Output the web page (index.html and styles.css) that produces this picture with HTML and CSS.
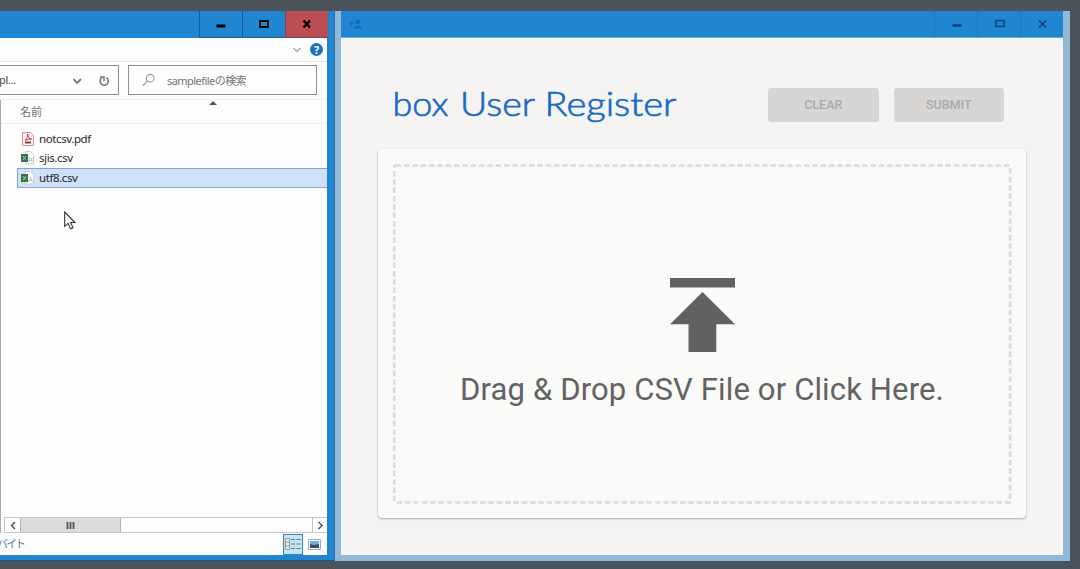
FILE: index.html
```html
<!DOCTYPE html>
<html lang="ja">
<head>
<meta charset="utf-8">
<title>box User Register</title>
<link rel="stylesheet" href="styles.css">
</head>
<body>
<div class="desktop">
  <section class="explorer">
    <header class="explorer-title">
      <button class="win-btn"><svg width="42" height="27"><path d="M16.500 15h9" stroke="#000" stroke-width="3"/></svg></button>
      <button class="win-btn"><svg width="42" height="27"><rect x="17" y="10" width="8" height="6" fill="none" stroke="#000" stroke-width="2"/></svg></button>
      <button class="win-btn close"><svg width="42" height="27"><path d="M17.500 9.500l6.500 7M24 9.500l-6.500 7" stroke="#000" stroke-width="2.200"/></svg></button>
    </header>
    <div class="explorer-body">
      <div class="ribbon">
        <svg width="10" height="8"><path d="M1.500 2l3.500 3.500L8.500 2" fill="none" stroke="#aaa" stroke-width="1.300"/></svg>
        <span class="help">?</span>
      </div>
      <div class="address-row">
        <div class="address">
          <span class="path">pl...</span>
          <svg class="address-icons" width="46" height="26">
            <path d="M1.500 12.200l3.700 3.700L8.900 12.200" fill="none" stroke="#707070" stroke-width="1.800"/>
            <path d="M34.500 10.700a4.100 4.100 0 1 1-5 .3M28 10h4v4" fill="none" stroke="#707070" stroke-width="1.500"/>
          </svg>
        </div>
        <div class="search">
          <svg width="14" height="14"><circle cx="8.200" cy="5.200" r="3.800" fill="none" stroke="#999" stroke-width="1.100"/><path d="M5.400 8L1 12.500" stroke="#999" stroke-width="1.200"/></svg>
          <span>samplefileの検索</span>
        </div>
      </div>
      <div class="file-pane">
        <div class="column-head"><span>名前</span><svg class="sort" width="8" height="4"><path d="M0 4l4-4 4 4z" fill="#555"/></svg></div>
        <ul class="files">
          <li><svg width="14" height="14"><path d="M1.500.5h8l3 3v10h-11z" fill="#fff4f4" stroke="#d98c92"/><path d="M4 8c3-2 3-5 2.500-6 0 3 2 5 4 5-2 0-4 0-6.500 1.500" fill="none" stroke="#d2303c"/><path d="M4 10.500h6" stroke="#7a4548" stroke-width="2"/></svg><span>notcsv.pdf</span></li>
          <li><svg width="14" height="14"><path d="M4.500.5h5l3 3v9.500h-8z" fill="#fff" stroke="#c9cdca"/><path d="M7.500 11l2-5 2 5M8 9.500h3" fill="none" stroke="#bac9bd"/><path d="M0 3h7v8H0z" fill="#3b704d"/><path d="M2 5l3 4M5 5L2 9" stroke="#a3c0aa"/></svg><span>sjis.csv</span></li>
          <li class="selected"><svg width="14" height="14"><path d="M4.500.5h5l3 3v9.500h-8z" fill="#fff" stroke="#c9cdca"/><path d="M7.500 11l2-5 2 5M8 9.500h3" fill="none" stroke="#bac9bd"/><path d="M0 3h7v8H0z" fill="#3b704d"/><path d="M2 5l3 4M5 5L2 9" stroke="#a3c0aa"/></svg><span>utf8.csv</span></li>
        </ul>
        <div class="scrollbar">
          <span class="scroll-btn"><svg width="8" height="9"><path d="M6 1L2.500 4.500 6 8" fill="none" stroke="#555" stroke-width="1.500"/></svg></span>
          <span class="thumb"><svg width="9" height="7"><path d="M1.500 0v7M4.500 0v7M7.500 0v7" stroke="#555" stroke-width="1.800"/></svg></span>
          <span class="scroll-btn right"><svg width="8" height="9"><path d="M2.500 1L6 4.500 2.500 8" fill="none" stroke="#555" stroke-width="1.500"/></svg></span>
        </div>
      </div>
      <footer class="status">
        <span class="bytes">バイト</span>
        <span class="view active"><svg width="16" height="14"><path d="M.5 1.500h4v11h-4zM.5 5h4M.5 9h4" fill="#eee" stroke="#999"/><path d="M6 2.500h10M6 7h10M6 11.500h10" stroke="#4c819f" stroke-width="1.200" stroke-dasharray="4 1.500"/></svg></span>
        <span class="view"><svg width="13" height="11"><path d="M.5.500h12v10H.5z" fill="#fff" stroke="#aaa"/><path d="M2 2h9v7H2z" fill="#6eb0df"/><path d="M2 5l4 1 5-1v4H2z" fill="#34546b"/></svg></span>
      </footer>
    </div>
    <svg class="cursor" width="12" height="19" viewBox="0 0 12 19"><path d="M.7 1v14.300l3.400-3 2.400 5.400 2.500-1.100-2.400-5.100h4.300z" fill="#fff" stroke="#333" stroke-width="1.100"/></svg>
  </section>

  <section class="app">
    <header class="app-title">
      <svg class="user-icon" width="15" height="13"><path d="M0 5.500h5M2.500 3v5" stroke="#1768c5" stroke-width="1.200"/><circle cx="8.700" cy="4" r="2.400" fill="#1768c5"/><path d="M4 10.500c0-4 9.500-4 9.500 0z" fill="#1768c5"/></svg>
      <span class="app-btn"><svg width="42" height="26"><path d="M17.500 14.500h9" stroke="#0b3f78" stroke-width="2.500"/></svg></span>
      <span class="app-btn"><svg width="42" height="26"><rect x="18" y="9.500" width="8" height="6" fill="none" stroke="#0b3f78" stroke-width="1.400"/></svg></span>
      <span class="app-btn"><svg width="42" height="26"><path d="M18 9.500l7 7M25 9.500l-7 7" stroke="#0b3f78" stroke-width="1.600"/></svg></span>
    </header>
    <main class="app-body">
      <div class="toolbar">
        <svg class="brand" width="290" height="44" role="heading">
          <text y="31.500"><tspan x="-.5" textLength="56" lengthAdjust="spacingAndGlyphs">box</tspan><tspan x="67" textLength="75" lengthAdjust="spacingAndGlyphs">User</tspan><tspan x="151.500" textLength="132" lengthAdjust="spacingAndGlyphs">Register</tspan></text>
        </svg>
        <div class="actions"><button class="action">CLEAR</button><button class="action">SUBMIT</button></div>
      </div>
      <div class="card">
        <div class="dropzone">
          <svg class="upload" width="65" height="75"><path d="M0 0h65v9.500H0zM32.500 14L65 46.300H46.300V74H18.500V46.300H0z" fill="#616161"/></svg>
          <p class="prompt">Drag &amp; Drop CSV File or Click Here.</p>
          <svg class="dashes" width="619" height="340"><rect x="1.200" y="1.500" width="616" height="337" rx="1.500" fill="none" stroke="#dbdbda" stroke-width="2.700" stroke-dasharray="5.500 2.830"/></svg>
        </div>
      </div>
    </main>
  </section>
</div>
</body>
</html>
```
FILE: styles.css
```css
* { box-sizing: border-box; }
body { margin: 0; background: #4b545a; overflow: hidden; }
svg { display: block; flex: none; }
button { padding: 0; border: 0; }
.desktop { display: flex; width: 1080px; height: 569px; padding-top: 11px; }

.explorer { position: relative; width: 335px; height: 550px; padding-right: 8px; background: #2186d2; border-right: 1px solid #3b6f9d; border-bottom: 1px solid #17588b; font-family: "Noto Sans", "Noto Sans CJK JP", sans-serif; }
.explorer-title { display: flex; justify-content: flex-end; height: 27px; margin-right: -2px; }
.win-btn { width: 43px; height: 27px; background: #2186d2; border-left: 1px solid #145b99; border-bottom: 1px solid #1b5f98; }
.win-btn.close { background: #bb4e53; border-color: #803f55; }
.explorer-body { display: flex; flex-direction: column; width: 327px; height: 517px; background: #fefefe; }
.ribbon { display: flex; flex: none; align-items: center; justify-content: flex-end; gap: 8px; height: 24px; padding-right: 4px; border-bottom: 1px solid #e5e5e5; }
.help { width: 13px; height: 13px; border-radius: 50%; background: #1c73bd; color: #fff; font-size: 11px; font-weight: 700; line-height: 13px; text-align: center; }
.address-row { display: flex; flex: none; gap: 9px; height: 38px; padding-top: 3px; border-bottom: 1px solid #eee; }
.address { display: flex; align-items: center; justify-content: space-between; width: 119px; height: 30px; border: 1px solid #8e8e8e; border-left: 0; color: #444; font-size: 11px; }
.path { margin: -2px 0 0 -1px; letter-spacing: -.3px; }
.search { display: flex; align-items: center; gap: 11px; width: 189px; height: 30px; padding-left: 13px; border: 1px solid #8e8e8e; color: #747474; font-size: 11px; letter-spacing: -.55px; white-space: nowrap; }
.file-pane { display: flex; flex-direction: column; flex: 1; border-left: 1px solid #aaa; }
.column-head { display: flex; height: 24px; padding-left: 19px; border-bottom: 1px solid #eee; color: #65717d; font-size: 11px; line-height: 24px; }
.sort { margin: 1px 0 0 167px; }
.files { flex: 1; margin: 0; padding: 5px 0 0 16px; list-style: none; }
.files li { display: flex; align-items: center; gap: 4px; height: 19.500px; padding-left: 3px; border: 1px solid transparent; border-right: 0; color: #262626; font-size: 11.500px; line-height: 17px; letter-spacing: -.4px; white-space: nowrap; }
.files span { margin-top: -1px; }
.files .selected { height: 20px; background: #cfe2fa; border-color: #7da8cf; }
.scrollbar { display: flex; height: 16px; margin-left: 3px; border: 1px solid #c7c7c7; border-right: 0; }
.scroll-btn { display: flex; align-items: center; justify-content: center; width: 15px; }
.scroll-btn.right { margin-left: auto; border-left: 1px solid #c7c7c7; }
.thumb { display: flex; align-items: center; justify-content: center; width: 101px; background: #dcdbdc; border: solid #b3b3b3; border-width: 0 1px; }
.status { display: flex; align-items: center; height: 22px; padding-right: 2px; }
.bytes { margin: 0 auto 0 -3px; color: #60798e; font-size: 11px; letter-spacing: -2px; line-height: 20px; }
.view { display: flex; align-items: center; justify-content: center; width: 22px; height: 20px; }
.view.active { width: 20px; height: 21px; background: #c4e4f6; border: 1px solid #3f83ac; }
.cursor { position: absolute; left: 64px; top: 200px; }

.app { width: 735px; height: 550px; padding: 0 7px 6px 6px; background: #91b8d7; }
.app-title { display: flex; height: 27px; background: #2186d2; border-bottom: 1px solid #6bafe0; }
.user-icon { margin: 7px auto 0 8px; }
.app-btn { width: 43px; border-left: 1px dotted #1b6bac; }
.app-body { height: 517px; padding: 42px 37px 0; background: #f5f4f3; }
.toolbar { display: flex; justify-content: space-between; height: 69px; padding: 4px 22px 0 15px; }
.brand { overflow: visible; }
.brand text { font-family: Lato, sans-serif; font-size: 33.500px; font-weight: 300; fill: #1769c6; stroke: #1769c6; stroke-width: .65px; stroke-linejoin: round; }
.actions { display: flex; gap: 15px; padding-top: 4px; }
.action { width: 110.500px; height: 33.500px; border-radius: 3px; background: #d7d6d5; color: #aaa; font: 500 12.500px/32px Roboto, sans-serif; }
.card { height: 369px; padding: 15px; border-radius: 4px; background: #fafaf9; box-shadow: 0 1px 2px #aaa, 0 0 2px #e4e4e4; }
.dropzone { position: relative; display: flex; flex-direction: column; align-items: center; height: 340px; padding-top: 114px; }
.dashes { position: absolute; inset: 0; }
.prompt { margin: 14.500px 0 0; color: #626262; font: 400 31px/44px Roboto, sans-serif; letter-spacing: .14px; white-space: nowrap; }
```
